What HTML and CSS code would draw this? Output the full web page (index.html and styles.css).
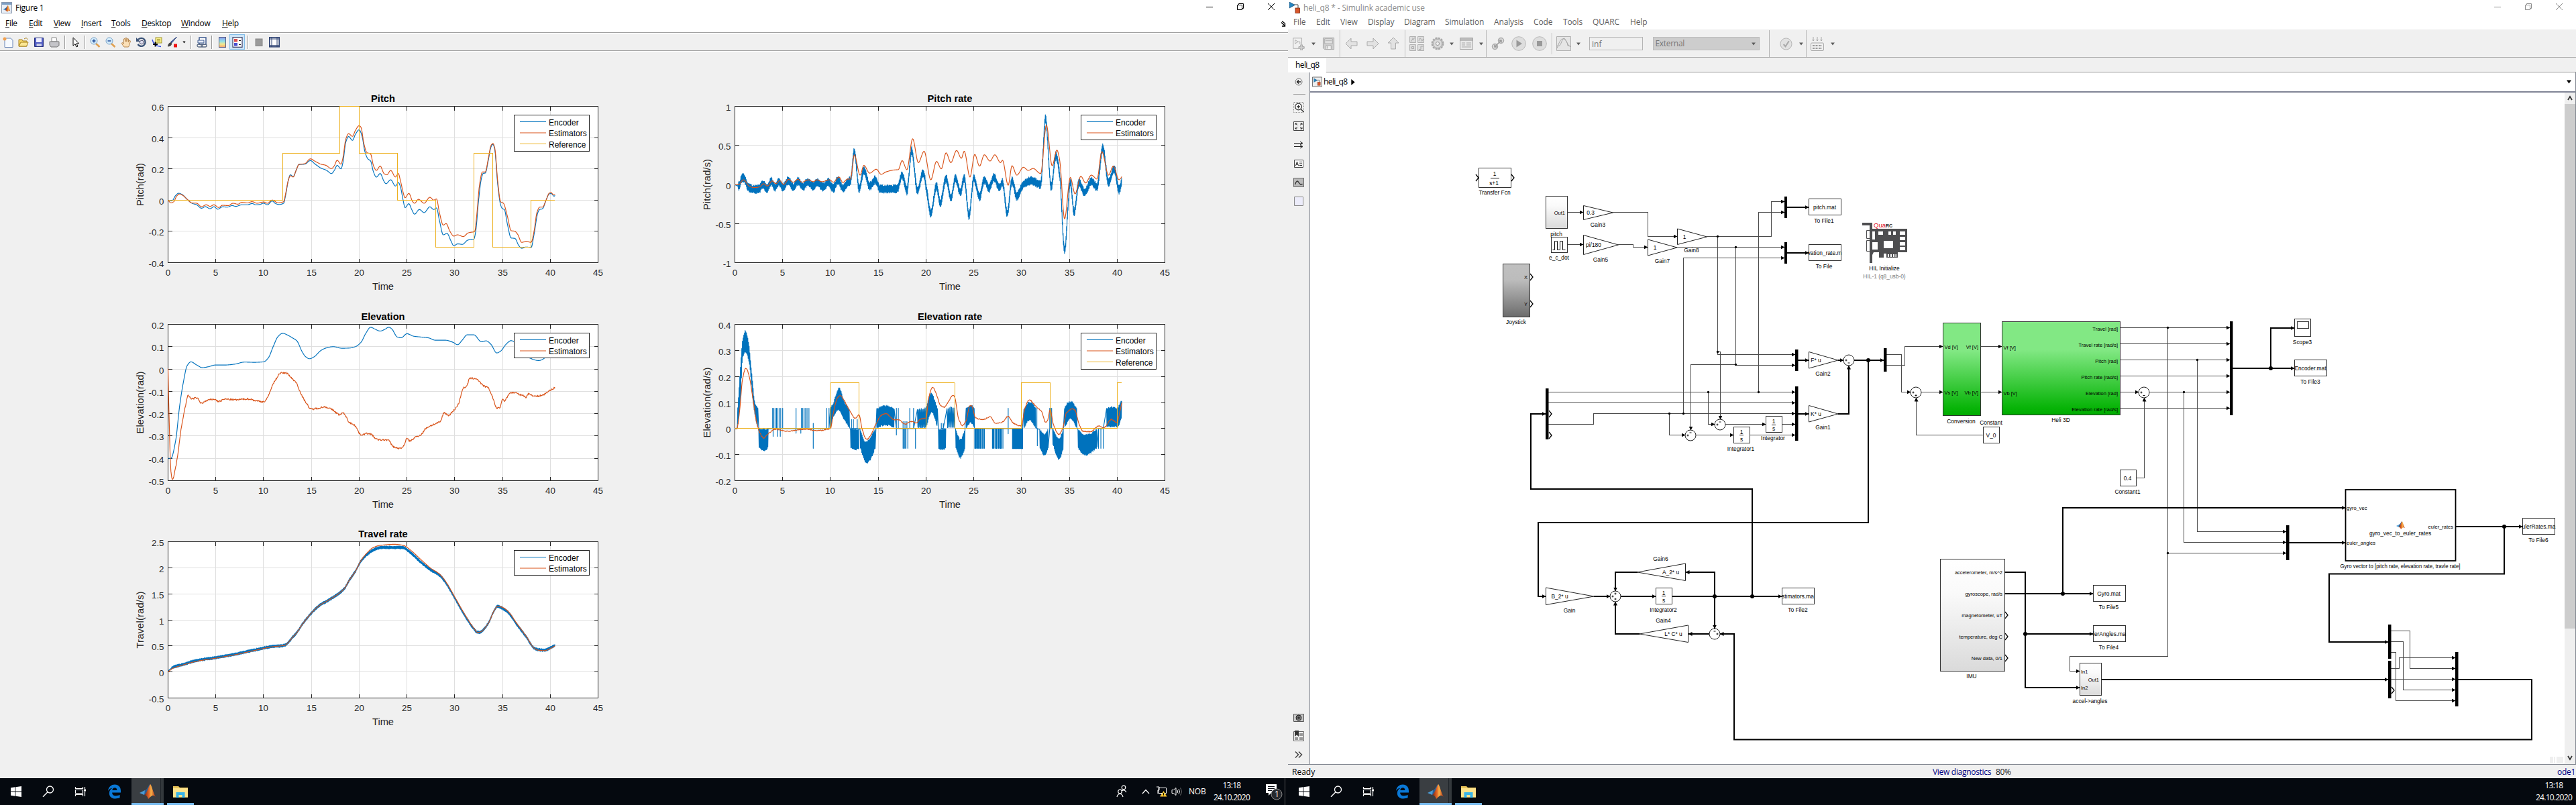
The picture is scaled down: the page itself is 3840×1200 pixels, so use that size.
FILE: index.html
```html
<!DOCTYPE html>
<html lang="en">
<head>
<meta charset="utf-8">
<title>Figure 1 / heli_q8</title>
<link rel="stylesheet" href="styles.css">
</head>
<body>
<svg class="defs" width="0" height="0" aria-hidden="true">
  <defs>
    <linearGradient id="flame" x1="0" x2="1"><stop offset="0" stop-color="#7a1d10"/><stop offset=".45" stop-color="#e8702a"/><stop offset=".6" stop-color="#f7b24a"/><stop offset="1" stop-color="#b3260f"/></linearGradient>
    <linearGradient id="rainbow" x1="0" y1="0" x2="0" y2="1"><stop offset="0" stop-color="#8f9bf0"/><stop offset=".4" stop-color="#8fe0e8"/><stop offset=".7" stop-color="#f5e98a"/><stop offset="1" stop-color="#f0a070"/></linearGradient>
    <linearGradient id="greenfill" x1="0" y1="0" x2="0" y2="1"><stop offset="0" stop-color="#82e884"/><stop offset=".3" stop-color="#82e884"/><stop offset=".92" stop-color="#08b408"/><stop offset="1" stop-color="#00ac00"/></linearGradient>
    <linearGradient id="grayfill" x1="0" y1="0" x2="0" y2="1"><stop offset="0" stop-color="#c0c0c0"/><stop offset=".3" stop-color="#bcbcbc"/><stop offset="1" stop-color="#6c6c6c"/></linearGradient>
    <linearGradient id="palefill" x1="0" y1="0" x2="0" y2="1"><stop offset="0" stop-color="#fff"/><stop offset=".3" stop-color="#fafafa"/><stop offset="1" stop-color="#dadada"/></linearGradient>
    <marker id="arr" viewBox="0 0 6 6" refX="5.5" refY="3" markerWidth="6" markerHeight="6" markerUnits="userSpaceOnUse" orient="auto"><path d="M0 0L6 3L0 6Z"/></marker>
    <symbol id="matlab" viewBox="0 0 24 22"><path d="M0 13L8 9L11 12L7 16Z" fill="#4a9bd4"/><path d="M8 9C12 8 13 1 16 0L11 13L7 16Z" fill="#2b5f94"/><path d="M16 0C18 1 20 12 24 19C20 15 18 17 13 22C12 19 10 16 7 16C11 14 13 4 16 0Z" fill="url(#flame)"/></symbol>
    <symbol id="slk" viewBox="0 0 16 17"><path d="M7 4H13V9" fill="none" stroke="#444"/><path d="M0 0L8 4.5L0 9Z" fill="#2485c0" stroke="#124c78" stroke-width=".8"/><rect x="9" y="9" width="6.5" height="7.5" fill="#d8562a" stroke="#7c2a10" stroke-width=".8"/></symbol>
    <symbol id="drop" viewBox="0 0 8 6"><path d="M.5 .5H7.5L4 5.5Z"/></symbol>
    <symbol id="min" viewBox="0 0 12 12"><path d="M1 6.5H11" fill="none" stroke="currentColor"/></symbol>
    <symbol id="restore" viewBox="0 0 12 12"><path d="M1.5 3.5H8.5V10.5H1.5ZM3.5 3.5V1.5H10.5V8.5H8.5" fill="none" stroke="currentColor"/></symbol>
    <symbol id="close" viewBox="0 0 12 12"><path d="M1 1L11 11M11 1L1 11" fill="none" stroke="currentColor"/></symbol>
    <symbol id="win" viewBox="0 0 16 16"><path d="M0 2.2L6.6 1.3V7.6H0ZM7.4 1.2L16 0V7.6H7.4ZM0 8.4H6.6V14.7L0 13.8ZM7.4 8.4H16V16L7.4 14.8Z" fill="#fff"/></symbol>
    <symbol id="find" viewBox="0 0 18 18"><circle cx="11.5" cy="6" r="5" fill="none" stroke="#fff" stroke-width="1.3"/><path d="M8 9.8L1 16.8" stroke="#fff" stroke-width="1.4"/></symbol>
    <symbol id="tasks" viewBox="0 0 18 18"><path d="M1.5 2V4.5H12.5V2M1.5 16V13.5H12.5V16M1.5 6.5H12.5V11.5H1.5ZM15.5 2V5M15.5 9V16" fill="none" stroke="#fff" stroke-width="1.2"/><rect x="14" y="5.500" width="3" height="3" fill="#fff"/></symbol>
    <symbol id="edge" viewBox="0 0 22 22"><path d="M1 10C2 3.500 6 0 11.500 0C18 0 21 4.500 21 10V12.500H7.500C7.700 16 10 17.500 13.500 17.500C16 17.500 18 17 19.500 16V20.500C17.500 21.600 15 22 12.500 22C6.500 22 3 18.500 3 13.500C3 9.500 5 7 8 5.500C5 5.700 2.500 7 1 10ZM7.600 8.800H15C15 6.300 13.800 5 11.700 5C9.500 5 8 6.500 7.600 8.800Z" fill="#0a78d6"/></symbol>
    <symbol id="files" viewBox="0 0 22 18"><path d="M0 1H8L10 3H22V17.500H0Z" fill="#e8c45a"/><path d="M0 4H22V17.500H0Z" fill="#fde38c"/><path d="M4.500 18V10H17.500V18H13.500V14H8.500V18Z" fill="#38b4e8"/></symbol>
  </defs>
</svg>

<div class="monitor figure-monitor">
  <header class="titlebar">
    <svg class="app" viewBox="0 0 16 17"><rect x=".5" y=".5" width="15" height="16" fill="#e8eef6" stroke="#8a9ab0"/><rect x="1" y="1" width="14" height="3" fill="#7d9fc4"/><use href="#matlab" x="2" y="5" width="12" height="10"/></svg>
    <span class="caption">Figure 1</span>
    <span class="winbtns"><svg><use href="#min"/></svg><svg><use href="#restore"/></svg><svg><use href="#close"/></svg></span>
  </header>
  <nav class="menu fig-menu"><span><u>F</u>ile</span><span><u>E</u>dit</span><span><u>V</u>iew</span><span><u>I</u>nsert</span><span><u>T</u>ools</span><span><u>D</u>esktop</span><span><u>W</u>indow</span><span><u>H</u>elp</span><svg class="dock" viewBox="0 0 8 9"><path d="M1 2.500L6 7M2 .5L6.500 4V8H2" fill="none" stroke="#000" stroke-width="1.300"/></svg></nav>
  <div class="fig-tools">
    <i><svg viewBox="0 0 16 16"><path d="M3 2H12L15 5V15.500H3Z" fill="#f6faff" stroke="#6a87b8"/><circle cx="3" cy="3" r="2.500" fill="#f0a050"/></svg></i>
    <i><svg viewBox="0 0 16 16"><path d="M1 4H6L7 6H13V14H1Z" fill="#f5d668" stroke="#a8821c"/><path d="M1 14L4 8H15L12.500 14Z" fill="#fbe794" stroke="#a8821c"/><path d="M9 3Q13 0 14 4" fill="none" stroke="#a8821c"/></svg></i>
    <i><svg viewBox="0 0 16 16"><path d="M1.500 1.500H14.500V14.500H1.500Z" fill="#4c58c0" stroke="#26307c"/><path d="M4 2H12V8H4Z" fill="#eef"/><path d="M4.500 10H12V14H4.500Z" fill="#c8cce8"/></svg></i>
    <i><svg viewBox="0 0 16 16"><path d="M4 1H11L12 7H4Z" fill="#fff" stroke="#888"/><path d="M1 7H15V13L12 15H3L1 12Z" fill="#c4c4c8" stroke="#777"/></svg></i>
    <i class="sep"></i>
    <i><svg viewBox="0 0 16 16"><path d="M5 1V13L8 10.500L10 15L12 14L10 9.800H13.500Z" fill="#fff" stroke="#000"/></svg></i>
    <i class="sep s7"></i>
    <i><svg viewBox="0 0 16 16"><path d="M8.500 9.500L14.500 15" stroke="#e0a050" stroke-width="2.600"/><circle cx="6" cy="6" r="5" fill="#d4ecfa" stroke="#7aa2c8"/><path d="M3.500 6H8.500M6 3.500V8.500" stroke="#234e9c" stroke-width="1.500"/></svg></i>
    <i><svg viewBox="0 0 16 16"><path d="M8.500 9.500L14.500 15" stroke="#e0a050" stroke-width="2.600"/><circle cx="6" cy="6" r="5" fill="#d4ecfa" stroke="#7aa2c8"/><path d="M3.500 6H8.500" stroke="#234e9c" stroke-width="1.500"/></svg></i>
    <i><svg viewBox="0 0 16 16"><path d="M5 15L1 9.500L2 8.500L4.500 10V3L6 2.500L7 7V1.500H8.800V7L10 2.500L11.600 3L11.300 8L13 5L14.500 6L12.500 13L11.500 15Z" fill="#fbe0b8" stroke="#b88850"/></svg></i>
    <i><svg viewBox="0 0 16 16"><path d="M3 4A6 6 0 1 1 2.500 11" fill="none" stroke="#3b5378" stroke-width="2.400"/><path d="M0 1V7H6Z" fill="#3b5378"/><path d="M5.500 6.500L8.500 5L11 6.500V9.500L8.500 11L5.500 9.500Z" fill="#dde" stroke="#446"/></svg></i>
    <i><svg viewBox="0 0 16 16"><rect x="6" y="1" width="9" height="8" fill="#f7ee8a" stroke="#a09430"/><path d="M8 3.500H13M8 6H13" stroke="#a09430"/><path d="M1 4Q3 14 14 14.500" fill="none" stroke="#3048e0" stroke-width="1.300"/><path d="M2 11H9M5.500 7.500V14.500" stroke="#000" stroke-width="1.800"/></svg></i>
    <i><svg viewBox="0 0 16 16"><path d="M14.500 0L7 9L5.500 7.500Z" fill="#5a78b8" stroke="#334a80"/><path d="M1 14.500Q1 9.500 5.500 8L7.500 10Q6 14.500 1 14.500Z" fill="#444"/><rect x="10" y="10.500" width="5" height="5" fill="#f01414"/></svg></i>
    <i class="dd"><svg viewBox="0 0 8 6"><use href="#drop"/></svg></i>
    <i class="sep s9"></i>
    <i><svg viewBox="0 0 16 16"><path d="M4 1H14V11H4Z" fill="#fff" stroke="#3d5a90" stroke-width="1.500"/><path d="M2 5H11V9H2Z" fill="#e6ecf8" stroke="#3d5a90"/><rect x="1" y="11" width="8" height="4" rx="2" fill="none" stroke="#5b6b84" stroke-width="1.300"/><rect x="7" y="11" width="8" height="4" rx="2" fill="none" stroke="#5b6b84" stroke-width="1.300"/></svg></i>
    <i class="sep s7"></i>
    <i><svg viewBox="0 0 16 16"><rect x="3.500" y=".5" width="10" height="15" fill="url(#rainbow)" stroke="#555a80"/></svg></i>
    <i class="on"><svg viewBox="0 0 16 16"><rect x="1" y=".7" width="14" height="14.600" fill="#fff" stroke="#3c3f66" stroke-width="1.200"/><rect x="3" y="3" width="5" height="4.500" fill="#e05050"/><rect x="3" y="9" width="5" height="4.500" fill="#4a50d0"/><path d="M10 5.500H13M10 11.500H13" stroke="#222"/></svg></i>
    <i class="sep s9"></i>
    <i><svg viewBox="0 0 16 16"><rect x="3" y="3" width="10" height="10.500" fill="#9a9a9a" stroke="#858585"/></svg></i>
    <i><svg viewBox="0 0 16 16"><rect x=".8" y=".8" width="14.400" height="14" fill="#fff" stroke="#2e4272" stroke-width="1.600"/><path d="M4 1V15M12 1V15M1 12.500H15M1 3H15" stroke="#2e4272"/></svg></i>
  </div>
  <main class="plots" id="plots"></main>
  <footer class="taskbar">
    <span class="tb"><svg width="16" height="16"><use href="#win"/></svg></span><span class="tb"><svg width="18" height="18"><use href="#find"/></svg></span><span class="tb"><svg width="18" height="18"><use href="#tasks"/></svg></span><span class="tb edge"><svg width="21" height="22"><use href="#edge"/></svg></span><span class="tb active"><svg width="24" height="22"><use href="#matlab"/></svg></span><span class="tb open"><svg width="22" height="18"><use href="#files"/></svg></span>
    <span class="tray">
      <svg class="people" viewBox="0 0 16 20" width="16" height="20"><g fill="none" stroke="#fff" stroke-width="1.200"><circle cx="11" cy="4" r="2.800"/><path d="M8.500 9Q12 6 15 11"/><circle cx="5.500" cy="10" r="2.800"/><path d="M1 18Q2 13.500 5.500 13.500T10 18"/></g></svg>
      <svg class="up" viewBox="0 0 12 8" width="12" height="8"><path d="M1 7L6 1.500L11 7" fill="none" stroke="#fff" stroke-width="1.300"/></svg>
      <svg class="net" viewBox="0 0 17 16" width="17" height="16"><path d="M4 2.500H15.500V10.500H4ZM6 14.500H12M9 10.500V14" fill="none" stroke="#fff"/><path d="M1 1H5V6H3V11" fill="none" stroke="#fff"/><path d="M11.500 7L16.500 15.500H6.500Z" fill="#fbc32d"/><path d="M11.500 10V13M11.500 13.700V14.700" stroke="#000"/></svg>
      <svg class="vol" viewBox="0 0 16 14" width="16" height="14"><path d="M1 4.500H3.500L7 1.500V12.500L3.500 9.500H1ZM9 5Q10.500 7 9 9M11 3Q14 7 11 11" fill="none" stroke="#fff"/><path d="M13.500 1.500Q17 7 13.500 12.500" fill="none" stroke="#777"/></svg>
      <span class="lang">NOB</span>
      <span class="clock">13:18<br>24.10.2020</span>
      <span class="notif"><svg viewBox="0 0 26 26" width="26" height="26"><path d="M1 2H17V15H9L5 19V15H1Z" fill="#fff"/><path d="M4 5.500H14M4 8.500H14M4 11.500H10" stroke="#0a0d14"/><circle cx="17" cy="17" r="8" fill="#26292e" stroke="#8a8a8a"/></svg><b>1</b></span>
    </span>
  </footer>
</div>

<div class="monitor sim-monitor">
  <header class="titlebar inactive">
    <svg class="app"><use href="#slk"/></svg>
    <span class="caption">heli_q8 * - Simulink academic use</span>
    <span class="winbtns"><svg><use href="#min"/></svg><svg><use href="#restore"/></svg><svg><use href="#close"/></svg></span>
  </header>
  <nav class="menu sim-menu"><span>File</span><span>Edit</span><span>View</span><span>Display</span><span>Diagram</span><span>Simulation</span><span>Analysis</span><span>Code</span><span>Tools</span><span>QUARC</span><span>Help</span></nav>
  <div class="sim-tools">
    <svg viewBox="0 0 22 22" width="20" height="20"><path d="M2 2H16V12M2 2V19H11" class="g"/><path d="M5 5L10 8L5 11ZM10 8H13V12" class="g"/><path d="M14 13H17V16H20V19H17V22H14V19H11V16H14Z" class="gf"/></svg>
    <svg class="dda" viewBox="0 0 8 6"><use href="#drop"/></svg>
    <svg viewBox="0 0 20 20" width="19" height="20"><path d="M1.500 1H18.500V19H3.500L1.500 17Z" class="gf"/><path d="M4 2.500H16V10H4ZM6 13H14V19H6Z" fill="#efefef" stroke="#a5a5a5"/><path d="M5 5H15M5 7.500H15M8 14V18" class="g"/></svg>
    <b></b>
    <svg viewBox="0 0 20 20" width="20" height="20"><path d="M1 10L9 2V7H18V13H9V18Z" class="ga"/></svg>
    <svg viewBox="0 0 20 20" width="20" height="20"><path d="M19 10L11 2V7H2V13H11V18Z" class="ga"/></svg>
    <svg viewBox="0 0 20 20" width="20" height="20"><path d="M10 1L18 9H13.500V18H6.500V9H2Z" class="ga"/></svg>
    <b></b>
    <svg viewBox="0 0 22 22" width="22" height="22"><path d="M.5 .5H9.500V9.500H.5ZM12.500 .5H21.500V9.500H12.500ZM.5 12.500H9.500V21.500H.5ZM12.500 12.500H21.500V21.500H12.500Z" fill="#ddd" stroke="#b0b0b0"/><path d="M2 8L5 4V2M5 6L8 2M14 7Q16 0 17.500 5T20.500 4M3.500 15.500H6.500V18.500H3.500ZM14 19.500H17V15H20.500" class="g"/></svg>
    <svg viewBox="0 0 20 20" width="20" height="20"><circle cx="10" cy="10" r="8.300" fill="#cfcfcf" stroke="#a8a8a8" stroke-width="2.200" stroke-dasharray="3.200 1.200"/><circle cx="10" cy="10" r="6.500" fill="#dcdcdc" stroke="#aaa"/><circle cx="10" cy="10" r="2.600" fill="#efefef" stroke="#999"/></svg>
    <svg class="dda" viewBox="0 0 8 6"><use href="#drop"/></svg>
    <svg viewBox="0 0 20 18" width="20" height="18"><path d="M.5 .5H19.500V17.500H.5Z" fill="#e8e8e8" stroke="#a5a5a5"/><path d="M1 3H19" stroke="#bbb" stroke-width="4"/><path d="M3 8H8M10 8H17M3 11H8M10 11H17M3 14H17" class="g"/></svg>
    <svg class="dda" viewBox="0 0 8 6"><use href="#drop"/></svg>
    <b></b>
    <svg viewBox="0 0 20 20" width="20" height="20"><circle cx="5.500" cy="14.500" r="4" fill="#ddd" stroke="#aaa" stroke-width="1.500"/><circle cx="14.500" cy="5.500" r="4" fill="#ddd" stroke="#aaa" stroke-width="1.500"/><path d="M5 15L15 5M5 11.500V15H8.500M11.500 5H15V8.500" fill="none" stroke="#999" stroke-width="1.500"/></svg>
    <svg viewBox="0 0 22 22" width="22" height="22"><circle cx="11" cy="11" r="10.300" fill="#dedede" stroke="#b8b8b8"/><path d="M7.500 5.500L16 11L7.500 16.500Z" fill="#999"/></svg>
    <svg viewBox="0 0 22 22" width="22" height="22"><circle cx="11" cy="11" r="10.300" fill="#dedede" stroke="#b8b8b8"/><path d="M7 7H15V15H7Z" fill="#999"/></svg>
    <b class="short"></b>
    <svg viewBox="0 0 22 22" width="22" height="22"><path d="M.5 .5H21.500V21.500H.5Z" fill="#e6e6e6" stroke="#b0b0b0"/><path d="M1 14Q5 17 8 8T14 6T21 16M1 18Q6 2 11 4T17 14L21 15" class="g"/></svg>
    <svg class="dda" viewBox="0 0 8 6"><use href="#drop"/></svg>
    <span class="stop-time">inf</span>
    <span class="mode">External<svg viewBox="0 0 8 6"><use href="#drop"/></svg></span>
    <b></b>
    <svg viewBox="0 0 20 20" width="19" height="19"><circle cx="10" cy="10" r="9" fill="#e2e2e2" stroke="#b0b0b0"/><path d="M6 10.500L9 14L14.500 5.500" fill="none" stroke="#aaa" stroke-width="2.200"/></svg>
    <svg class="dda" viewBox="0 0 8 6"><use href="#drop"/></svg>
    <b></b>
    <svg viewBox="0 0 20 21" width="20" height="21"><path d="M4 0V6M10 0V6M16 0V6M2.500 4L4 6L5.500 4M8.500 4L10 6L11.500 4M14.500 4L16 6L17.500 4" class="g"/><rect x=".5" y="9" width="19" height="11.500" rx="1.500" class="g"/><path d="M3 13H17M3 17H17" stroke="#999" stroke-width="2" stroke-dasharray="3 1.500"/></svg>
    <svg class="dda" viewBox="0 0 8 6"><use href="#drop"/></svg>
  </div>
  <div class="tabs"><span class="tab">heli_q8</span></div>
  <div class="editor">
    <aside class="palette">
      <div class="tools-top">
        <svg viewBox="0 0 16 16"><circle cx="8" cy="8" r="5" fill="none" stroke="#777"/><path d="M5 8H11M8 5.500L5.500 8L8 10.500" fill="none" stroke="#222" stroke-width="1.400"/></svg>
        <hr>
        <svg viewBox="0 0 16 16"><path d="M.5 .5H15.500V15.500H.5Z" fill="none" stroke="#888" stroke-dasharray="2 2"/><circle cx="7.500" cy="7" r="4.800" fill="#fff" stroke="#333" stroke-width="1.300"/><path d="M5 7H10M7.500 4.500V9.500M11 10.500L15.500 15" stroke="#333" stroke-width="1.400"/></svg>
        <svg viewBox="0 0 16 16"><path d="M.5 1.500H15.500V14.500H.5Z" fill="#eee" stroke="#444"/><path d="M3 6V4H5.500M3 4L6 6.500M13 6V4H10.500M13 4L10 6.500M3 10V12H5.500M3 12L6 9.500M13 10V12H10.500M13 12L10 9.500" fill="none" stroke="#222"/></svg>
        <svg viewBox="0 0 16 16"><path d="M1 5.500H13M1 10.500H13M10 3L14 5.500L10 8M10 8L14 10.500L10 13" fill="none" stroke="#222"/></svg>
        <svg viewBox="0 0 16 16"><path d="M1.500 2.500H14.500V13.500H1.500Z" fill="#fff" stroke="#444"/><path d="M3.500 11L5.500 5L7.500 11M4 9H7M9 5.500H13M9 8H13M9 10.500H13" fill="none" stroke="#222"/></svg>
        <svg viewBox="0 0 16 16"><path d="M.5 1.500H15.500V14.500H.5Z" fill="#bbb" stroke="#666"/><path d="M2.500 11Q5 3 8 8T13.500 10" fill="none" stroke="#333" stroke-width="1.400"/></svg>
        <svg viewBox="0 0 16 16"><path d="M1.500 1.500H14.500V14.500H1.500Z" fill="#ececfa" stroke="#888"/></svg>
      </div>
      <div class="tools-bottom">
        <svg viewBox="0 0 16 16"><path d="M.5 3.500H15.500V14.500H.5Z" fill="#c8c8c8" stroke="#555"/><circle cx="8" cy="9" r="4" fill="#777" stroke="#222"/><circle cx="8" cy="9" r="1.800" fill="#333"/></svg>
        <svg viewBox="0 0 16 16"><path d="M.5 1.500H15.500V15.500H.5Z" fill="#eee" stroke="#666"/><path d="M9 4H14V8H9ZM9 10H14V14H9ZM2 10H7V14H2Z" fill="#999"/><path d="M2 0H8V9L5 6.500L2 9Z" fill="#333"/></svg>
        <svg viewBox="0 0 16 16"><path d="M3 3.500L7.500 8L3 12.500M8 3.500L12.500 8L8 12.500" fill="none" stroke="#444" stroke-width="1.500"/></svg>
      </div>
    </aside>
    <section class="workspace">
      <div class="crumb"><svg class="model" viewBox="0 0 16 16"><path d="M.5 .5H15.500V15.500H.5Z" fill="#eee" stroke="#666"/><use href="#slk" x="2.500" y="2.500" width="11" height="11.500"/></svg><span>heli_q8</span><svg class="chevron" viewBox="0 0 6 10"><path d="M0 0L6 5L0 10Z"/></svg><svg class="dda last" viewBox="0 0 8 6"><use href="#drop"/></svg></div>
      <div class="canvas-row">
      <svg class="diagram" viewBox="1953 138 1870 1001" width="1870" height="1001">
        <g class="bx">
          <rect x="2204.500" y="250.500" width="48" height="29"/>
          <rect x="2304.500" y="292.500" width="32" height="48" fill="url(#palefill)"/>
          <rect x="2312.500" y="353.500" width="24" height="23"/>
          <rect x="2240.500" y="393.500" width="40" height="79" fill="url(#grayfill)"/>
          <rect x="2696.500" y="296.500" width="48" height="24"/><rect x="2696.500" y="364.500" width="48" height="24"/>
          <rect x="2632.500" y="620.500" width="24" height="24"/><rect x="2584.500" y="636.500" width="24" height="24"/>
          <rect x="2468.500" y="876.500" width="24" height="24"/><rect x="2656.500" y="876.500" width="48" height="24"/>
          <rect x="2896.500" y="481.500" width="56" height="138" fill="url(#greenfill)"/>
          <rect x="2984.500" y="479.500" width="176" height="139" fill="url(#greenfill)"/>
          <rect x="2956.500" y="636.500" width="24" height="24"/><rect x="3160.500" y="700.500" width="24" height="24"/>
          <rect x="3420.500" y="475.500" width="24" height="26"/><rect x="3424.500" y="479.500" width="17" height="10" rx="1"/>
          <rect x="3420.500" y="536.500" width="48" height="24"/>
          <rect x="2892.500" y="833.500" width="96" height="167" fill="url(#palefill)"/>
          <rect x="3120.500" y="872.500" width="48" height="24"/><rect x="3120.500" y="932.500" width="48" height="24"/>
          <rect x="3100.500" y="988.500" width="32" height="48" fill="url(#palefill)"/>
          <rect x="3760.500" y="772.500" width="48" height="24"/>
        </g>
        <rect x="3496.500" y="730" width="164" height="106" fill="#fff" stroke="#000" stroke-width="1.800"/>
        <g class="tri">
          <path d="M2360.500 306.500L2404.500 317L2360.500 327.500Z"/><path d="M2500.500 341L2544.500 353L2500.500 364.500Z"/><path d="M2360.500 350.500L2412.500 365L2360.500 379.500Z"/><path d="M2456.500 357L2500 369L2456.500 381Z"/>
          <path d="M2696.500 524.500L2740 537L2696.500 549Z"/><path d="M2696.500 604.500L2740 617L2696.500 629Z"/>
          <path d="M2304.500 876L2376 889L2304.500 901.500Z"/><path d="M2512.500 840L2441 853L2512.500 865.500Z"/><path d="M2516.500 932L2444 945L2516.500 957.500Z"/>
          <circle cx="2756" cy="537" r="8"/><circle cx="2856" cy="585" r="8"/><circle cx="2564" cy="633" r="8"/><circle cx="2520" cy="649" r="8"/><circle cx="2408" cy="889" r="8"/><circle cx="2556" cy="945" r="8"/><circle cx="3196" cy="585" r="8"/>
        </g>
        <g class="wire">
          <path d="M2337 316.500H2360"/><path d="M2404 316.500H2456.500V352.500H2500"/><path d="M2337 364.500H2360"/><path d="M2412 364.500H2434.500V368.500H2456"/>
          <path d="M2544 352.500H2640.500V300.500H2660"/><path d="M2500 368.500H2660"/><path d="M2621.500 584.500V316.500H2660"/><path d="M2509.500 616.500V384.500H2660"/>
          <path d="M2560.500 352.500V528.500H2676"/><path d="M2560.500 524.500H2564.500V625"/><path d="M2587.500 368.500V544.500H2676"/><path d="M2587.500 543.500H2520.500V641"/>
          <path d="M2308 584.500H2676"/><path d="M2308 600.500H2676"/><path d="M2308 632.500H2375.500V616.500H2676"/>
          <path d="M2546.500 584.500V632.500H2556"/><path d="M2572 632.500H2632"/><path d="M2657 632.500H2676"/>
          <path d="M2488.500 616.500V648.500H2512"/><path d="M2528 648.500H2584"/><path d="M2609 648.500H2676"/>
          <path d="M2812 528.500H2834.500V584.500H2848"/><path d="M2812 544.500H2839.500V516.500H2896"/>
          <path d="M2956 648.500H2856.500V593"/><path d="M2864 584.500H2896"/><path d="M2953 516.500H2984"/><path d="M2953 584.500H2984"/>
          <path d="M3161 488.500H3324"/><path d="M3161 512.500H3324"/><path d="M3161 536.500H3324"/><path d="M3161 560.500H3324"/><path d="M3161 584.500H3188"/><path d="M3204 584.500H3324"/><path d="M3161 608.500H3324"/>
          <path d="M3185 712.500H3196.500V593"/>
          <path d="M3231.500 488.500V978.500H3085.500V1000.500H3100"/><path d="M3231.500 824.500H3408"/><path d="M3255.500 584.500V808.500H3408"/><path d="M3275.500 536.500V792.500H3408"/>
          <path d="M3564 940.500H3592.500V996.500H3660"/><path d="M3564 956.500H3582.500V1028.500H3660"/><path d="M3564 972.500H3571.500V1044.500H3660"/><path d="M3564 996.500H3576.500V980.500H3660"/><path d="M3564 1012.500H3660"/>
        </g>
        <g class="bus">
          <path d="M2664 309H2696"/><path d="M2664 377H2696"/><path d="M2680 537H2696"/><path d="M2740 537H2748"/><path d="M2764 537H2808"/>
          <path d="M2680 617H2696"/><path d="M2740 617H2756V545"/>
          <path d="M2612 889V729H2282V617H2304"/><path d="M2785 537V779H2293V889H2304"/>
          <path d="M2376 889H2400"/><path d="M2416 889H2468"/><path d="M2493 889H2656"/>
          <path d="M2556 889V853H2513"/><path d="M2441 853H2408V881"/><path d="M2444 945H2408V897"/><path d="M2556 889V937"/><path d="M2548 945H2517"/>
          <path d="M3664 1013H3774V1102.500H2585V945H2564"/>
          <path d="M3328 549H3420"/><path d="M3385 549V489H3420"/>
          <path d="M2988 853H3019V1025H3100"/><path d="M3019 945H3120"/><path d="M2988 885H3120"/><path d="M3075 885V757H3496"/>
          <path d="M3412 809H3496"/><path d="M3661 785H3760"/><path d="M3733 785V855.500H3472V957H3560"/><path d="M3133 1013H3560"/>
        </g>
        <g class="mux">
          <rect x="2660" y="293" width="4" height="32"/><rect x="2660" y="361" width="4" height="32"/><rect x="2676" y="521" width="4.500" height="32"/><rect x="2676" y="576" width="4.500" height="81"/><rect x="2808" y="519" width="4.500" height="35"/><rect x="2304" y="579" width="4.500" height="76"/><rect x="3324" y="479" width="4.500" height="140"/><rect x="3408" y="783" width="4.500" height="52"/><rect x="3560" y="931" width="4.500" height="51"/><rect x="3560" y="985" width="4.500" height="56"/><rect x="3660" y="972" width="4.500" height="81"/>
        </g>
        <g>
          <circle cx="2560.500" cy="352.500" r="1.700"/><circle cx="2587.500" cy="368.500" r="1.700"/><circle cx="2560.500" cy="524.500" r="1.700"/><circle cx="2587.500" cy="543.500" r="1.700"/><circle cx="2621.500" cy="584.500" r="1.700"/><circle cx="2546.500" cy="584.500" r="1.700"/><circle cx="2509.500" cy="616.500" r="1.700"/><circle cx="2488.500" cy="616.500" r="1.700"/><circle cx="3231.500" cy="488.500" r="1.700"/><circle cx="3275.500" cy="536.500" r="1.700"/><circle cx="3255.500" cy="584.500" r="1.700"/><circle cx="3231.500" cy="824.500" r="1.700"/>
          <circle cx="2785" cy="537" r="3"/><circle cx="2556" cy="889" r="3"/><circle cx="2612" cy="889" r="3"/><circle cx="3385" cy="549" r="3"/><circle cx="3075" cy="885" r="3"/><circle cx="3019" cy="945" r="3"/><circle cx="3733" cy="785" r="3"/>
        </g>
        <path class="port" d="M2200 260L2204 265L2200 270M2253 260L2257 265L2253 270M2281 408L2285 413L2281 418M2281 448L2285 453L2281 458M2309 612L2313 617L2309 622M2309 644L2313 649L2309 654M2989 912L2993 917L2989 922M2989 944L2993 949L2989 954M2989 976L2993 981L2989 986M3565 1024L3569 1029L3565 1034"/>
        <path class="glyph" d="M2222 265.500H2235M2314.500 372.500H2317.500V359.500H2321.500V372.500H2325.500V359.500H2329.500V372.500H2333.500M2641 633.500H2647M2593 648.500H2599M2477 888.500H2483"/>
        <path class="signs" d="M2750.500 537H2753.500M2752 535.500V538.500M2754.500 541H2757.500M2850.500 585H2853.500M2852 583.500V586.500M2854.500 589.500H2857.500M2856 588V591M2558.500 633H2561.500M2560 631.500V634.500M2562.500 629H2565.500M2514.500 649H2517.500M2516 647.500V650.500M2518.500 645H2521.500M2402.500 889H2405.500M2404 887.500V890.500M2406.500 885H2409.500M2408 883.500V886.500M2406.500 893H2409.500M2408 891.500V894.500M2554.500 941H2557.500M2558.500 945H2561.500M2560 943.500V946.500M3190.500 585H3193.500M3192 583.500V586.500M3194.500 589.500H3197.500"/>
        <g class="t mid">
          <text x="2228" y="258.500">1</text><text x="2227" y="273">s+1</text><text x="2228" y="286.500">Transfer Fcn</text><text x="2320" y="348.500">pitch</text><text x="2371" y="317">0.3</text><text x="2382" y="334.500">Gain3</text><text x="2511" y="352.500">1</text><text x="2521.500" y="372.500">Gain8</text><text x="2324" y="383.500">e_c_dot</text><text x="2375.500" y="365">pi/180</text><text x="2386" y="386.500">Gain5</text><text x="2467" y="369">1</text><text x="2478" y="388.500">Gain7</text>
          <text x="2720" y="309">pitch.mat</text><text x="2719" y="328.500">To File1</text><text x="2720" y="377">vation_rate.m</text><text x="2719" y="396.500">To File</text><text x="2260" y="479.500">Joystick</text><text x="2809" y="399.500">HIL Initialize</text><text x="2809" y="411.500" class="dim">HIL-1 (q8_usb-0)</text>
          <text x="2707" y="537">F* u</text><text x="2717.500" y="556.500">Gain2</text><text x="2707" y="617">K* u</text><text x="2717.500" y="636.500">Gain1</text><text x="2644" y="628">1</text><text x="2644" y="638.500">s</text><text x="2643" y="653">Integrator</text><text x="2596" y="644">1</text><text x="2596" y="654.500">s</text><text x="2595" y="668.500">Integrator1</text>
          <text x="2325" y="889">B_2* u</text><text x="2339.500" y="909.500">Gain</text><text x="2480" y="884">1</text><text x="2480" y="894.500">s</text><text x="2479.500" y="908.500">Integrator2</text><text x="2680" y="889">stimators.ma</text><text x="2680" y="908.500">To File2</text><text x="2490.500" y="852.500">A_2* u</text><text x="2475.500" y="832.500">Gain6</text><text x="2494.500" y="944.500">L* C* u</text><text x="2479.500" y="924.500">Gain4</text>
          <text x="2923.500" y="627.500">Conversion</text><text x="2968" y="629.500">Constant</text><text x="2968" y="648.500">V_0</text><text x="3072" y="625.500">Heli 3D</text><text x="3171.500" y="712.500">0.4</text><text x="3171.500" y="732.500">Constant1</text><text x="3432" y="509.500">Scope3</text><text x="3444" y="549">Encoder.mat</text><text x="3444" y="568.500">To File3</text>
          <text x="2939" y="1007.500">IMU</text><text x="3143.500" y="884.500">Gyro.mat</text><text x="3143.500" y="904.500">To File5</text><text x="3144.500" y="944.500">lerAngles.ma</text><text x="3143.500" y="964.500">To File4</text><text x="3115.500" y="1044.500">accel-&gt;angles</text><text x="3784.500" y="784.500">ulerRates.ma</text><text x="3784" y="804.500">To File6</text><text x="3578" y="794.500">gyro_vec_to_euler_rates</text><text x="3578" y="843.500" textLength="179" lengthAdjust="spacingAndGlyphs">Gyro vector to [pitch rate, elevation rate, travle rate]</text>
        </g>
        <g class="t end small">
          <text x="2333" y="317">Out1</text><text x="2277" y="413.500">X</text><text x="2277" y="453.500">Y</text><text x="2949" y="517">Vf [V]</text><text x="2949" y="585">Vb [V]</text>
          <text x="3157" y="490">Travel [rad]</text><text x="3157" y="514">Travel rate [rad/s]</text><text x="3157" y="538">Pitch [rad]</text><text x="3157" y="562">Pitch rate [rad/s]</text><text x="3157" y="586">Elevation [rad]</text><text x="3157" y="610">Elevation rate [rad/s]</text>
          <text x="2985" y="853">accelerometer, m/s^2</text><text x="2985" y="885">gyroscope, rad/s</text><text x="2985" y="917">magnetometer, uT</text><text x="2985" y="949">temperature, deg C</text><text x="2985" y="981">New data, 0/1</text><text x="3129" y="1013">Out1</text><text x="3657" y="785">euler_rates</text>
        </g>
        <g class="t small">
          <text x="2898.500" y="517">Vd [V]</text><text x="2898.500" y="585">Vs [V]</text><text x="2986.500" y="518">Vf [V]</text><text x="2986.500" y="586">Vb [V]</text><text x="3102" y="1001">In1</text><text x="3102" y="1025">In2</text><text x="3498" y="757">gyro_vec</text><text x="3498" y="809">euler_angles</text>
        </g>
        <use href="#matlab" x="3572" y="777" width="13" height="12"/>
        <g class="board">
          <path d="M2776 332H2791V341H2843V376H2829V384H2812V378H2808V384H2801V376H2793L2791 380V392H2787V336H2776Z"/>
          <path d="M2782.500 343.500H2787.500V355.500H2782.500ZM2782.500 358.500H2787.500V374.500H2782.500Z" fill="#fff" stroke="#4e4e50"/>
          <path d="M2791 345H2795V357H2791ZM2800 345H2807V350H2800ZM2815 345H2819V350H2815ZM2822 345H2826V350H2822ZM2832 345H2840V350H2832ZM2832 353H2840V358H2832ZM2832 361H2840V366H2832ZM2832 368H2840V373H2832ZM2808 359H2822V370H2808ZM2791 361H2799V372H2791ZM2814 379H2816V383H2814ZM2818 379H2820V383H2818ZM2822 379H2824V383H2822ZM2825.500 379H2827V383H2825.500Z" fill="#fff"/>
        </g>
        <text x="2793" y="339" class="quarc">Qua<tspan>RC</tspan></text>
        <path d="M3801 1128h5v10h-5zM3807 1128h2v10h-2zM3811 1128h10v10h-10z" fill="#efefef"/>
      </svg>
      <div class="scroll"><svg viewBox="0 0 16 17"><path d="M5 11L8 6L11 11" fill="none" stroke="#333" stroke-width="1.800"/></svg><i></i><svg viewBox="0 0 16 17" class="down"><path d="M5 5L8 10L11 5" fill="none" stroke="#333" stroke-width="1.800"/></svg></div>
      </div>
    </section>
  </div>
  <div class="status"><span>Ready</span><span class="info"><em>View diagnostics</em><span>80%</span></span><em>ode1</em></div>
  <footer class="taskbar">
    <span class="tb"><svg width="16" height="16"><use href="#win"/></svg></span><span class="tb"><svg width="18" height="18"><use href="#find"/></svg></span><span class="tb"><svg width="18" height="18"><use href="#tasks"/></svg></span><span class="tb edge"><svg width="21" height="22"><use href="#edge"/></svg></span><span class="tb active"><svg width="24" height="22"><use href="#matlab"/></svg></span><span class="tb open"><svg width="22" height="18"><use href="#files"/></svg></span>
    <span class="tray"><span class="clock">13:18<br>24.10.2020</span></span>
  </footer>
</div>
<script src="plots.js"></script>
</body>
</html>
```
FILE: styles.css
```css
* { box-sizing: border-box; }
body { margin: 0; display: flex; width: 3840px; height: 1200px; overflow: hidden; background: #f0f0f0; font: 12px/16px "Open Sans", "Noto Sans", sans-serif; color: #000; }
.defs { position: absolute; }
.monitor { width: 1920px; height: 1200px; display: flex; flex-direction: column; }
svg { display: block; flex: none; }

/* window chrome */
.titlebar { height: 23px; background: #fff; display: flex; align-items: center; padding-left: 2px; }
.titlebar .app { width: 16px; height: 17px; margin-right: 5px; }
.caption { letter-spacing: -.3px; }
.sim-monitor .caption { letter-spacing: -.17px; }
.winbtns { margin-left: auto; display: flex; gap: 34px; padding: 0 19px 3px 0; }
.winbtns svg { width: 12px; height: 12px; }
.inactive { color: #8c8c8c; }
.menu { background: #fff; display: grid; align-items: center; letter-spacing: -.3px; }
.fig-menu { height: 26px; padding: 0 0 1px 8px; grid-template-columns: 35px 37px 41px 45px 45px 59px 61px 1fr 11px; border-bottom: 1px solid #a0a0a0; }
.menu u { text-underline-offset: 2px; }
.dock { width: 8px; height: 9px; }
.sim-menu { height: 21px; padding-left: 8px; grid-template-columns: 34px 36px 41px 54px 61px 73px 59px 44px 44px 56px 1fr; color: #5f5f5f; letter-spacing: -.15px; border-bottom: 1px solid #eee; }

/* figure toolbar */
.fig-tools { height: 27px; border-top: 1px solid #fff; border-bottom: 1px solid #a0a0a0; display: flex; align-items: center; }
.fig-tools i { width: 23px; height: 23px; display: flex; align-items: center; justify-content: center; }
.fig-tools svg { width: 16px; height: 16px; }
.fig-tools .sep { width: 8px; }
.fig-tools .sep::before { content: ""; width: 1px; height: 20px; background: #999; box-shadow: 1px 0 #fff; }
.fig-tools .s7 { width: 7px; }
.fig-tools .s9 { width: 9px; }
.fig-tools .dd { width: 12px; }
.fig-tools .dd svg { width: 5px; height: 4px; }
.fig-tools .on { background: #cce4f7; border: 1px solid #84bde8; }

/* plots */
.plots { flex: 1; display: grid; grid-template-columns: 845px 642px; grid-template-rows: 325px 324px 234px; padding: 81px 0 0 250px; border-top: 1px solid #fff; }
.plots svg { width: 642px; height: 234px; overflow: visible; font-family: "Liberation Sans", Arial, sans-serif; }
.plot-bg { fill: #fff; }
.plot-frame { fill: none; stroke: #262626; shape-rendering: crispEdges; }
.grid { stroke: #dfdfdf; shape-rendering: crispEdges; }
.ticks { stroke: #262626; shape-rendering: crispEdges; }
.tick { font-size: 13.33px; fill: #262626; }
.axis { font-size: 14.67px; fill: #262626; }
.plot-title { font-size: 14.67px; font-weight: bold; }
.key { font-size: 12px; }
.legend { fill: #fff; stroke: #262626; shape-rendering: crispEdges; }
.mid { text-anchor: middle; }
.end { text-anchor: end; }
.line { fill: none; stroke-linejoin: round; stroke-width: 1.15; }
.enc { stroke: #0072bd; }
.est { stroke: #d95319; }
.ref { stroke: #edb120; stroke-width: 1; shape-rendering: crispEdges; }

/* taskbar */
.taskbar { height: 40px; background: #05090f; color: #fff; display: flex; }
.sim-monitor .taskbar { margin-left: -5px; padding-left: 4px; border-left: 1px solid #555; }
.tb { width: 48px; height: 40px; display: flex; align-items: center; justify-content: center; }
.edge { width: 52px; }
.active { width: 48px; background: linear-gradient(90deg, #3a3e42 43px, #1f2429 43px, #1f2429 44px, #33383c 44px); border-bottom: 3px solid #76b9ed; padding-right: 1px; }
.open { width: 40px; margin-left: 5px; border-bottom: 3px solid #76b9ed; }
.active svg, .open svg { margin-top: 3px; }
.tray { margin-left: auto; display: flex; align-items: center; letter-spacing: -.2px; }
.people { margin-right: 22px; }
.up { margin-right: 9px; }
.net { margin-right: 6px; }
.vol { margin-right: 10px; }
.lang { width: 26px; }
.clock { width: 76px; text-align: center; line-height: 18px; letter-spacing: -.7px; }
.figure-monitor .tray { padding-right: 4px; }
.notif { display: flex; width: 42px; justify-content: center; position: relative; padding-left: 8px; }
.notif b { position: absolute; left: 26px; top: 9px; font-size: 12px; font-weight: 400; }
.sim-monitor .clock { width: 66px; }

/* simulink toolbar */
.sim-tools { height: 42px; border-bottom: 1px solid #aeaeae; border-top: 1px solid #fff; display: grid; align-items: center; justify-items: center; grid-template-columns: 32px 12px 32px 2px 34px 28px 33px 2px 33px 30px 12px 31px 13px 2px 34px 28px 34px 2px 33px 12px 100px 168px 20px 31px 13px 2px 32px 13px; }
.sim-tools > b { width: 1px; height: 40px; background: #b2b2b2; box-shadow: 1px 0 #f8f8f8; }
.sim-tools .short { height: 32px; }
.sim-tools .dda, .mode svg { width: 8px; height: 5px; fill: #5c5c5c; }
.g { fill: none; stroke: #a8a8a8; }
.gf { fill: #cfcfcf; stroke: #a5a5a5; }
.ga { fill: #e2e2e2; stroke: #aaa; }
.stop-time { width: 80px; height: 20px; border: 1px solid #b5b5b5; padding-left: 3px; line-height: 19px; color: #777; }
.mode { width: 159px; height: 20px; background: #cdcdcd; border: 1px solid #bbb; padding: 0 4px 0 3px; color: #777; display: flex; align-items: center; justify-content: space-between; letter-spacing: -.3px; }
.tabs { height: 22px; padding-top: 1px; border-bottom: 1px solid #999; display: flex; }
.tab { width: 57px; height: 21px; background: #fff; padding-left: 11px; line-height: 20px; letter-spacing: -.6px; }
.editor { height: 1032px; display: flex; border-bottom: 1px solid #828790; }
.palette { width: 32px; display: flex; flex-direction: column; justify-content: space-between; padding: 6px 0 6px 8px; }
.palette svg { width: 16px; height: 16px; }
.palette hr { width: 18px; height: 1px; border: 0; background: #999; margin: -2px 0 3px; }
.tools-top, .tools-bottom { display: flex; flex-direction: column; gap: 12px; }
.tools-top hr + svg { margin-top: -4px; }
.workspace { flex: 1; border-left: 1px solid #828790; border-right: 1px solid #828790; background: #fff; }
.crumb { height: 30px; border-bottom: 2px solid #808495; padding: 0 5px 0 3px; display: flex; align-items: center; letter-spacing: -.6px; }
.model { width: 15px; height: 16px; margin-right: 2px; }
.chevron { width: 6px; height: 9px; margin-left: 6px; fill: #000; }
.crumb .last { width: 9px; height: 6px; margin-left: auto; }
.canvas-row { display: flex; height: 1001px; }
.scroll { width: 16px; background: #efefef; display: flex; flex-direction: column; }
.scroll svg { width: 16px; height: 17px; }
.scroll i { height: 782px; background: #cdcdcd; }
.scroll .down { margin-top: auto; }
.status { height: 20px; display: grid; grid-template-columns: 955px 1fr auto; align-items: center; padding: 1px 1px 0 6px; }
.status em { font-style: normal; color: #000080; letter-spacing: -.3px; }
.info { display: grid; grid-template-columns: 94px auto; letter-spacing: -.4px; color: #222; }

/* block diagram */
.diagram { font-family: "Liberation Sans", Arial, sans-serif; overflow: hidden; }
.bx rect { stroke: #333; shape-rendering: crispEdges; }
.bx rect:not([fill]) { fill: #fff; }
.tri path, .tri circle { fill: #fff; stroke: #222; }
.wire path { fill: none; stroke: #4a4a4a; shape-rendering: crispEdges; }
.wire path, .bus path { marker-end: url(#arr); }
.bus path { fill: none; stroke: #000; stroke-width: 2; }
.port { fill: none; stroke: #000; stroke-width: 1.3; }
.glyph, .signs { fill: none; stroke: #111; }
.t text { font-size: 8.4px; dominant-baseline: central; fill: #000; }
.t.small text { font-size: 7.5px; }
.t .dim { fill: #777; }
.board { fill: #4e4e50; }
.quarc { font-size: 9.5px; fill: #e00a1a; }
.quarc tspan { fill: #222; font-size: 7px; font-weight: bold; }
```
FILE: plots.js
```js
const T_MAX = 45, W = 641, H = 233;

// Monotone cubic interpolation through [t, v, t, v, ...] pairs.
function curve(flat) {
  const x = [], y = [];
  for (let i = 0; i < flat.length; i += 2) { x.push(flat[i]); y.push(flat[i + 1]); }
  const n = x.length, d = [], m = [];
  for (let i = 0; i < n - 1; i++) d.push((y[i + 1] - y[i]) / (x[i + 1] - x[i]));
  m[0] = d[0]; m[n - 1] = d[n - 2];
  for (let i = 1; i < n - 1; i++) m[i] = d[i - 1] * d[i] <= 0 ? 0 : 2 * d[i - 1] * d[i] / (d[i - 1] + d[i]);
  return {
    start: x[0], end: x[n - 1],
    at(t) {
      let i = 0;
      while (i < n - 2 && t > x[i + 1]) i++;
      const h = x[i + 1] - x[i], s = Math.min(1, Math.max(0, (t - x[i]) / h));
      return (1 + 2 * s) * (1 - s) ** 2 * y[i] + s * (1 - s) ** 2 * h * m[i]
        + s * s * (3 - 2 * s) * y[i + 1] + s * s * (s - 1) * h * m[i + 1];
    }
  };
}

let seed = 7;
const rnd = () => (seed = (seed * 16807) % 2147483647) / 2147483647;

function sample(flat, noise = 0) {
  const c = curve(flat), out = [];
  for (let t = c.start; t <= c.end; t += 0.05) out.push([t, c.at(t) + (rnd() - 0.5) * 2 * noise]);
  return out;
}
function zigzag(flat, half, step = 0.03) {
  const c = curve(flat), out = [];
  let s = 1;
  for (let t = c.start; t <= c.end; t += step) { s = -s; out.push([t, c.at(t) + s * half * (t < 0.35 ? 0.05 : 0.55 + rnd() * 0.45)]); }
  return out;
}
function band(top, bottom, step = 0.035) {
  const a = curve(top), b = curve(bottom), out = [];
  let s = 0;
  for (let t = a.start; t <= a.end; t += step) { s = 1 - s; const k = rnd() * 0.006; out.push([t, s ? a.at(t) - k : b.at(t) + k]); }
  return out;
}
const spikes = (v, ...ts) => ts.flatMap(t => [[t, 0], [t, v], [t, 0]]);
const steps = flat => { const o = []; for (let i = 0; i < flat.length; i += 3) o.push([flat[i], flat[i + 2]], [flat[i + 1], flat[i + 2]]); return o; };
const range = (a, b, s) => { const o = []; for (let t = a; t < b; t += s * (0.6 + rnd() * 0.8)) o.push(t); return o; };

const elevRate = [
  [[0, 0], [0.25, 0]],
  band([.3,.08,.6,.25,.8,.34,1.1,.378,1.4,.34,1.8,.2,2.1,.1,2.4,.08], [.3,0,.6,.12,.8,.27,1.1,.29,1.5,.25,1.8,.14,2.1,.05,2.4,0]),
  band([2.5,0,3.5,0], [2.5,-.075,3,-.088,3.5,-.075]),
  spikes(.078, 3.95,4.05,4.2,4.35,4.5,4.65,4.8,5), spikes(-.03, 4,4.45,4.75), spikes(.078, 6.4), spikes(-.018, 6.4),
  spikes(.078, 6.95,7.1,7.25,7.4,7.55,7.75), spikes(-.018, 6.9), spikes(.02, 8.2), spikes(-.076, 8.2), spikes(.078, 9.6,9.85),
  band([10,.08,10.3,.1,10.9,.157,11.5,.1,12,.078], [10,0,10.4,.05,10.8,.07,11.3,.04,12,0]),
  band([12.1,0,13,0], [12.1,-.076,12.7,-.084,13,-.076]), spikes(.035, 12.2,12.4,12.8),
  band([13.1,0,13.7,-.05,14.2,-.03,14.7,0], [13.1,-.075,13.8,-.135,14.2,-.12,14.7,-.075]),
  band([14.85,.078,15.3,.086,15.7,.09,16.2,.087,16.7,.078], [14.85,0,15.8,.012,16.7,0]), spikes(.078, 16.9,17.1), spikes(-.025, 16.9),
  spikes(-.076, 17.6,17.7,17.8,17.9,18.1,18.9), spikes(.027, 17.6,17.8,18,18.3), spikes(.078, 18.3,18.7),
  band([19.1,.078,19.5,.078,20,.082], [19.1,0,20,0], 0.05),
  band([20,.08,20.4,.13,20.6,.138,20.9,.11,21.2,.08], [20,0,20.6,.06,20.8,.05,21.2,0]),
  band([21.3,0,22.1,0], [21.3,-.076,21.7,-.084,22.1,-.076]), spikes(.02, 21.6,21.8),
  band([22.2,.078,22.7,.084,23,.078], [22.2,0,23,0], 0.06),
  band([23.1,0,23.6,-.04,24.1,0], [23.1,-.076,23.6,-.115,24.1,-.076]),
  band([24.2,.078,24.7,.092,25.1,.078], [24.2,0,24.7,.02,25.1,0]),
  spikes(-.076, ...range(25.1, 26.2, .1)), spikes(-.076, ...range(26.95, 27.9, .09), 28.05), spikes(.078, 28.6), spikes(-.02, 28.6),
  spikes(-.077, ...range(29.05, 30.15, .06)),
  band([30.25,.078,30.8,.103,31.1,.1,31.5,.078], [30.25,0,30.8,.03,31.5,0]), spikes(-.066, 31.65), spikes(.078, 31.6),
  band([31.9,0,32.4,-.02,32.8,0], [31.9,-.076,32.4,-.105,32.8,-.076]), spikes(.078, 32.95,33.05,33.15),
  band([33.25,0,33.9,-.035,34.4,0], [33.25,-.06,33.9,-.12,34.4,-.078]),
  band([34.5,.08,34.8,.1,35.2,.106,35.8,.078], [34.5,0,35.1,.035,35.8,0]),
  band([35.9,0,36.5,-.02,37,-.02,37.9,0], [35.9,-.076,36.6,-.104,37.2,-.096,37.9,-.075]), spikes(-.076, 38.05,38.3,38.55),
  band([38.9,.078,39.4,.086,40,.078], [38.9,.005,40,.005]),
  band([40.05,.08,40.5,.112], [40.05,0,40.5,.04])
].flat();

const plots = [
  { title: 'Pitch', label: 'Pitch(rad)', min: -0.4, max: 0.6, step: 0.2, series: [
    ['enc', sample([0,0,.4,-.005,.8,.03,1.1,.044,1.5,.035,2,.005,2.5,-.02,3,-.03,3.5,-.052,3.9,-.042,4.4,-.055,4.8,-.042,5.2,-.058,5.7,-.043,6.2,-.045,6.7,-.035,7.1,-.04,7.7,-.03,8.3,-.03,8.8,-.022,9.2,-.03,9.6,-.028,10,-.02,10.4,-.03,10.9,-.005,11.2,-.02,11.6,-.028,12.1,-.02,12.3,.03,12.6,.13,12.8,.162,13.1,.15,13.4,.19,13.7,.228,14.3,.23,14.9,.253,15.4,.23,16,.205,16.6,.19,17.1,.17,17.4,.19,17.7,.222,18.1,.2,18.3,.24,18.6,.37,18.9,.407,19.3,.382,19.6,.42,20,.45,20.3,.41,20.6,.31,20.9,.265,21.2,.25,21.5,.18,21.8,.147,22.2,.17,22.6,.12,22.8,.105,23.3,.13,23.8,.09,24.1,.112,24.3,.09,24.6,0,24.8,-.048,25.2,-.023,25.5,-.06,25.8,-.09,26.3,-.06,26.8,-.08,27.4,-.043,27.8,-.06,28.1,-.05,28.4,-.13,28.8,-.222,29.2,-.213,29.6,-.26,29.9,-.292,30.3,-.28,30.8,-.283,31.4,-.255,32,-.25,32.2,-.2,32.5,0,32.8,.14,33,.172,33.2,.173,33.5,.25,33.8,.34,34,.357,34.2,.32,34.5,.1,34.8,-.03,35,-.055,35.2,-.06,35.5,-.15,35.9,-.242,36.3,-.245,36.7,-.29,37,-.308,37.5,-.3,38,-.303,38.3,-.22,38.7,-.08,38.9,-.06,39.2,-.055,39.5,-.01,39.9,.04,40.1,.042,40.4,.025,40.5,.03])],
    ['est', sample([0,0,.3,-.018,.6,-.01,.9,.025,1.2,.039,1.6,.028,2,.005,2.5,-.018,3,-.02,3.5,-.042,4,-.03,4.4,-.04,4.8,-.03,5.3,-.047,5.7,-.033,6.3,-.035,6.8,-.02,7.3,-.026,7.7,-.015,8.3,-.018,8.8,-.01,9.3,-.02,10,-.012,10.4,-.02,10.9,0,11.5,-.017,12.1,-.01,12.3,.04,12.6,.13,12.8,.156,13.1,.148,13.4,.19,13.7,.228,14.3,.233,14.9,.264,15.4,.248,16,.23,16.5,.223,17.1,.202,17.4,.22,17.7,.255,18.1,.23,18.3,.27,18.6,.39,18.9,.425,19.3,.408,19.6,.445,20,.476,20.2,.465,20.5,.36,20.8,.305,21.2,.295,21.5,.22,21.8,.19,22.2,.218,22.6,.17,22.9,.162,23.3,.19,23.8,.148,24.1,.17,24.3,.13,24.6,.05,24.8,.015,25.2,.043,25.6,-.01,25.8,-.02,26.2,.005,26.8,-.02,27.4,.018,27.8,0,28.1,.007,28.4,-.08,28.8,-.16,29.1,-.15,29.5,-.2,29.9,-.23,30.3,-.222,30.9,-.233,31.4,-.21,32.1,-.2,32.3,-.1,32.6,.1,32.9,.18,33.2,.18,33.5,.26,33.8,.35,34,.362,34.2,.33,34.5,.12,34.8,-.01,35.1,-.02,35.5,-.1,35.9,-.195,36.3,-.2,36.6,-.22,37,-.27,37.5,-.265,38,-.27,38.3,-.2,38.6,-.08,38.9,-.045,39.2,-.045,39.5,-.01,39.9,.045,40.1,.048,40.3,.035,40.5,.034])],
    ['ref', steps([0,12,0,12,18,.3,18,20,.6,20,24,.3,24,28,0,28,32,-.3,32,34,.3,34,38,-.3,38,40.5,0])]
  ] },
  { title: 'Pitch rate', label: 'Pitch(rad/s)', min: -1, max: 1, step: 0.5, series: [
    ['enc', zigzag([0,0,.4,-.02,.8,.09,1.1,.05,1.4,-.04,2,-.06,2.6,-.05,2.9,0,3.4,-.05,3.8,.04,4.2,-.04,4.6,.04,5,-.04,5.6,.05,6.1,-.04,6.6,.04,7.1,-.03,7.6,.03,8.2,-.02,8.6,.03,9.2,-.03,9.8,.03,10.3,-.05,10.8,.06,11.3,-.05,11.8,.03,12.1,.05,12.5,.42,13,-.05,13.5,.18,14.1,-.02,14.7,.06,15.2,-.06,16,-.06,17,-.05,17.5,.12,18,-.08,18.5,.43,19.1,-.08,19.7,.15,20.1,-.1,20.5,-.37,21.1,-.02,21.5,-.24,22.1,.08,22.6,-.17,23.1,.08,23.6,-.1,24,.08,24.5,-.4,25,.08,25.6,-.16,26.1,.06,26.6,-.05,27.1,.09,27.7,-.04,28,.03,28.5,-.37,29,.05,29.5,-.15,30.2,0,31,.05,32,0,32.5,.84,33.1,-.03,33.6,.37,34,.1,34.5,-.84,35.1,.03,35.5,-.36,36,.02,36.6,-.1,37.3,.04,37.9,-.03,38.5,.47,39.1,.02,39.7,.2,40.2,-.07,40.5,.06], 0.057)],
    ['est', sample([0,-.005,.4,0,.9,.06,1.5,-.02,2,-.04,2.6,-.03,3,.01,3.4,-.02,3.9,.045,4.3,.01,4.7,.05,5.1,0,5.6,.065,6.1,.03,6.6,.065,7,.03,7.7,.06,8.2,.035,8.6,.06,9.1,.035,9.9,.06,10.3,.03,10.9,.095,11.3,.025,11.8,.07,12.1,.07,12.5,.38,13.1,.12,13.5,.245,14.1,.145,14.8,.195,15.3,.13,15.8,.16,16.6,.185,17.1,.19,17.5,.305,18,.19,18.6,.585,19.2,.28,19.8,.425,20.5,.06,21.1,.295,21.6,.2,22.1,.405,22.6,.28,23.2,.435,23.7,.335,24,.425,24.6,.095,25.1,.385,25.6,.235,26.1,.38,26.7,.3,27.2,.38,27.8,.28,28,.31,28.6,-.01,29,.24,29.5,.12,30.2,.22,30.7,.18,31.2,.205,32,.14,32.6,.76,33.2,.24,33.7,.44,34,.3,34.5,-.44,35.1,.09,35.6,-.12,36.2,.105,36.7,.02,37.3,.12,37.9,.07,38.4,.42,39.1,.12,39.6,.235,40.2,.06,40.5,.1])]
  ] },
  { title: 'Elevation', label: 'Elevation(rad)', min: -0.5, max: 0.2, step: 0.1, series: [
    ['enc', sample([0,-.4,.3,-.4,.8,-.32,1.2,-.17,1.6,-.06,2,.015,2.4,.032,3,.018,3.6,.006,4.2,.01,5,.018,6,.018,7,.022,8,.031,9,.03,10,.032,10.5,.05,11,.1,11.5,.145,12,.16,12.5,.152,13,.14,13.5,.125,14,.08,14.4,.055,14.8,.046,15.3,.055,16,.083,16.6,.095,17.3,.1,18.2,.093,19,.094,19.6,.1,20.2,.12,20.7,.16,21.2,.187,21.6,.18,22.2,.17,22.7,.178,23.1,.187,23.4,.18,24,.143,24.4,.14,25,.158,25.7,.147,26.5,.143,27.2,.14,28,.129,29,.129,29.8,.12,30.3,.109,30.8,.13,31.3,.153,32,.153,32.8,.122,33.3,.126,33.8,.11,34.4,.072,34.8,.08,35.4,.112,35.9,.127,36.3,.12,37,.08,37.8,.05,38.8,.038,39.6,.055,40.5,.1])],
    ['est', sample([0,0,.1,-.2,.3,-.46,.45,-.497,.7,-.46,1,-.39,1.4,-.26,1.8,-.17,2.1,-.12,2.5,-.133,3,-.13,3.5,-.153,4,-.143,4.8,-.135,5.3,-.145,6,-.135,7,-.138,8.4,-.134,9.2,-.142,10,-.146,10.4,-.13,10.8,-.085,11.3,-.045,11.8,-.018,12.4,-.018,12.9,-.04,13.4,-.06,14,-.12,14.6,-.16,14.9,-.18,15.5,-.177,16.4,-.17,17.2,-.183,18,-.205,18.3,-.197,19,-.24,19.5,-.25,20.2,-.294,21,-.288,22,-.317,23,-.318,23.6,-.348,24.3,-.356,24.7,-.34,25,-.312,25.3,-.322,25.9,-.305,26.5,-.293,27,-.265,27.7,-.25,28.5,-.235,28.9,-.195,29.3,-.207,29.9,-.185,30.4,-.155,30.9,-.085,31.2,-.08,31.6,-.042,32.2,-.043,33,-.075,33.5,-.085,34,-.13,34.4,-.175,34.7,-.175,35,-.135,35.2,-.142,35.8,-.107,36.3,-.106,36.8,-.115,37.2,-.118,37.4,-.128,37.7,-.112,38.5,-.122,39.3,-.115,39.8,-.1,40.5,-.083], 0.004)]
  ] },
  { title: 'Elevation rate', label: 'Elevation(rad/s)', min: -0.2, max: 0.4, step: 0.1, series: [
    ['enc', elevRate],
    ['est', sample([0,0,.2,0,.5,.07,.8,.19,1.15,.232,1.5,.2,1.9,.11,2.3,.02,2.6,-.015,3,-.036,3.5,-.02,4.2,-.003,5.5,-.01,7.5,-.002,8.5,-.008,10,0,10.3,.06,10.7,.115,11,.127,11.4,.11,12,.07,12.6,.04,13,.053,13.3,0,13.8,-.042,14.2,-.025,14.8,.02,15.3,.05,15.8,.057,16.6,.035,17.2,.033,17.8,.017,18.5,.027,19,.022,19.4,.036,20,.04,20.3,.12,20.7,.158,21.1,.13,21.5,.09,21.9,.082,22.3,.1,22.8,.127,23,.12,23.4,.04,23.8,.012,24.2,.03,24.6,.088,24.8,.085,25.2,.04,26,.035,26.7,.045,27.3,.02,28,.025,28.6,.047,29.1,.022,30,.01,30.3,.07,30.8,.11,31.5,.085,32.1,.065,32.5,.025,32.7,.03,33,.073,33.3,.02,33.9,-.022,34.3,0,34.7,.06,35.3,.075,35.6,.07,36,.02,36.4,-.01,37.2,-.012,38.1,.01,38.6,.003,39.4,.035,40,.022,40.2,.05,40.5,.1], 0.0018)],
    ['ref', steps([0,10,0,10,13,.175,13,20,0,20,23,.175,23,30,0,30,33,.175,33,40,0,40,40.5,.175])]
  ] },
  { title: 'Travel rate', label: 'Travel(rad/s)', min: -0.5, max: 2.5, step: 0.5, series: [
    ['enc', zigzag([0,.02,.5,.09,1.5,.14,3,.22,5,.275,7,.34,9,.42,11,.49,12.2,.51,12.6,.57,13,.66,13.5,.76,14,.9,15,1.13,15.8,1.27,17,1.4,18.4,1.59,19,1.77,19.6,1.93,20.2,2.13,20.8,2.25,21.6,2.35,22.4,2.39,24.5,2.39,25.5,2.27,26.5,2.1,27.5,1.96,28.4,1.86,29,1.73,30,1.42,31,1.1,32,.83,32.4,.76,32.7,.77,33.5,.93,34.2,1.2,34.5,1.26,35,1.22,35.6,1.14,36.5,.91,37.5,.67,38.3,.46,38.7,.43,39.4,.42,40,.46,40.5,.51], 0.028)],
    ['est', sample([0,0,.5,.07,1.5,.13,3,.205,5,.265,7,.33,9,.41,11,.485,12.2,.51,12.6,.57,13,.66,13.5,.76,14,.9,15,1.13,15.8,1.27,17,1.4,18.4,1.59,19,1.77,19.6,1.93,20.2,2.14,20.8,2.28,21.4,2.38,22.2,2.43,23.7,2.45,24.6,2.43,25.5,2.32,26.5,2.15,27.5,1.99,28.4,1.88,29,1.75,30,1.44,31,1.12,32,.84,32.4,.76,32.7,.77,33.5,.93,34.2,1.2,34.5,1.26,35,1.24,35.6,1.16,36.5,.93,37.5,.68,38.3,.46,38.7,.42,39.4,.41,40,.45,40.5,.5])]
  ] }
];

const names = { enc: 'Encoder', est: 'Estimators', ref: 'Reference' };
const fmt = v => String(+v.toFixed(2));

document.getElementById('plots').innerHTML = plots.map(p => {
  const X = t => 0.5 + t / T_MAX * W;
  const Y = v => 0.5 + (p.max - v) / (p.max - p.min) * H;
  let grid = '', ticks = '', labels = '';
  for (let t = 0; t <= T_MAX; t += 5) {
    const x = Math.floor(X(t)) + 0.5;
    grid += `M${x} .5V${H}`;
    ticks += `M${x} .5v6M${x} ${H + 0.5}v-6`;
    labels += `<text class="tick mid" x="${x}" y="253">${t}</text>`;
  }
  for (let v = p.min; v <= p.max + 1e-6; v += p.step) {
    const y = Math.floor(Y(v)) + 0.5;
    grid += `M.5 ${y}H${W}`;
    ticks += `M.5 ${y}h6M${W + 0.5} ${y}h-6`;
    labels += `<text class="tick end" x="-5.5" y="${y + 6}">${fmt(v)}</text>`;
  }
  const lines = p.series.map(([k, pts]) => `<path class="line ${k}" d="M${pts.map(([t, v]) => X(t).toFixed(2) + ' ' + Y(v).toFixed(2)).join('L')}"/>`).join('');
  const n = p.series.length;
  const keys = p.series.map(([k], i) => {
    const y = 23.5 + i * 16.5;
    return `<path class="line ${k}" d="M525 ${y}H564"/><text class="key" x="568" y="${y + 5}">${names[k]}</text>`;
  }).join('');
  return `<svg><rect class="plot-bg" width="642" height="234"/><path class="grid" d="${grid}"/>
    <rect class="plot-frame" x=".5" y=".5" width="641" height="233"/><path class="ticks" d="${ticks}"/>${lines}${labels}
    <text class="plot-title mid" x="321" y="-6.500">${p.title}</text><text class="axis mid" x="321" y="274">Time</text>
    <text class="axis mid" transform="translate(-36 117) rotate(-90)" textLength="${{ 'Pitch(rad)': 64, 'Pitch(rad/s)': 76, 'Elevation(rad)': 93, 'Elevation(rad/s)': 105, 'Travel(rad/s)': 85 }[p.label]}">${p.label}</text>
    <rect class="legend" x="516.500" y="13.500" width="112" height="${n === 3 ? 54 : 37}"/>${keys}</svg>`;
}).join('');
```
